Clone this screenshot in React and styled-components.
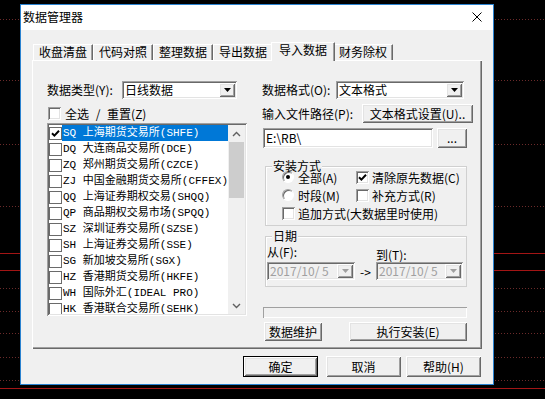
import React from "react";
import styled, { createGlobalStyle, css } from "styled-components";

const GlobalStyle = createGlobalStyle`
  html, body { margin: 0; padding: 0; background: #000; }
  body { font-family: "Noto Sans CJK SC", "Noto Sans", sans-serif; font-size: 12px; color: #000; }
  * { box-sizing: border-box; }
`;

const raised = css`
  background: #f0f0f0;
  box-shadow: inset 1px 1px #fff, inset -1px -1px #696969, inset 2px 2px #e3e3e3, inset -2px -2px #a0a0a0;
`;
const sunken = css`
  box-shadow: inset 1px 1px #a0a0a0, inset -1px -1px #fff, inset 2px 2px #696969, inset -2px -2px #e3e3e3;
`;

const Desktop = styled.div`
  position: relative;
  width: 545px;
  height: 399px;
  overflow: hidden;
  background: #000;
`;

const ChartLayer = styled.svg`
  position: absolute;
  left: 0;
  top: 0;
`;

const Window = styled.div`
  position: absolute;
  left: 20px;
  top: 4px;
  width: 474px;
  height: 381px;
  border: 1px solid #2a82d0;
  background: #f0f0f0;
  display: flex;
  flex-direction: column;
`;

const TitleBar = styled.div`
  height: 25px;
  flex: none;
  background: #fff;
  display: flex;
  align-items: center;
  justify-content: space-between;
  padding-left: 2px;
`;

const Title = styled.span`
  line-height: 16px;
  padding-bottom: 2px;
`;

const CloseBtn = styled.div`
  width: 32px;
  height: 25px;
  display: flex;
  align-items: center;
  justify-content: center;
  padding-bottom: 1px;
`;

const Body = styled.div`
  flex: 1;
  display: flex;
  flex-direction: column;
  padding: 12px 11px 7px 11px;
`;

const TabStrip = styled.div`
  display: flex;
  align-items: flex-end;
  height: 18px;
  padding-left: 1px;
  position: relative;
  z-index: 1;
`;

const Tab = styled.div`
  height: 16px;
  line-height: 14px;
  padding: 0 5px;
  border-top: 1px solid #fff;
  border-left: 1px solid #fff;
  border-right: 1px solid #696969;
  box-shadow: inset -1px 0 #a0a0a0;
  white-space: nowrap;
  background: #f0f0f0;
  ${(p) =>
    p.$active &&
    css`
      height: 19px;
      margin: 0 -2px -1px;
      padding: 0 7px;
      position: relative;
      z-index: 2;
    `}
`;

const Panel = styled.div`
  height: 289px;
  flex: none;
  box-shadow: inset 1px 1px #fff, inset -1px -1px #696969, inset -2px -2px #a0a0a0;
  display: grid;
  grid-template-columns: 200px 211px;
  column-gap: 15px;
  align-items: start;
  padding: 21px 0 0 15px;
`;

const Column = styled.div`
  display: flex;
  flex-direction: column;
`;

const FieldRow = styled.div`
  display: flex;
  align-items: center;
  height: ${(p) => p.$h || 18}px;
  margin-top: ${(p) => p.$mt || 0}px;
  margin-left: ${(p) => p.$ml || 0}px;
`;

const Label = styled.span`
  width: ${(p) => (p.$w ? `${p.$w}px` : "auto")};
  flex: none;
  line-height: 16px;
  white-space: nowrap;
`;

const Combo = styled.div`
  width: ${(p) => p.$w}px;
  height: 18px;
  flex: none;
  background: ${(p) => (p.$disabled ? "#f0f0f0" : "#fff")};
  display: flex;
  align-items: center;
  padding: 2px;
  ${sunken};
`;

const ComboText = styled.span`
  flex: 1;
  line-height: 14px;
  padding-left: 1px;
  white-space: nowrap;
  color: ${(p) => (p.$disabled ? "#a0a0a0" : "#000")};
`;

const DropBtn = styled.div`
  width: 16px;
  height: 100%;
  flex: none;
  display: flex;
  align-items: center;
  justify-content: center;
  ${raised};
`;

const Button = styled.button`
  font: inherit;
  color: #000;
  border: none;
  padding: 0;
  margin: 0 0 0 ${(p) => p.$ml || 0}px;
  width: ${(p) => p.$w}px;
  height: ${(p) => p.$h || 21}px;
  flex: none;
  line-height: 14px;
  white-space: nowrap;
  ${raised};
  ${(p) =>
    p.$default &&
    css`
      box-shadow: inset 0 0 0 1px #000, inset 2px 2px #fff, inset -2px -2px #696969, inset 3px 3px #e3e3e3,
        inset -3px -3px #a0a0a0;
    `}
`;

const TextBox = styled.div`
  width: ${(p) => p.$w}px;
  height: 20px;
  flex: none;
  background: #fff;
  padding: 2px 3px;
  line-height: 16px;
  ${sunken};
`;

const CheckBox = styled.span`
  width: 13px;
  height: 13px;
  flex: none;
  background: #fff;
  display: inline-flex;
  align-items: center;
  justify-content: center;
  ${(p) => (p.$flat ? css`border: 1px solid #6a6a6a;` : sunken)};
`;

const RadioCircle = styled.span`
  width: 12px;
  height: 12px;
  flex: none;
  border-radius: 50%;
  background: #fff;
  border: 1px solid;
  border-color: #a0a0a0 #fff #fff #a0a0a0;
  box-shadow: inset 1px 1px #696969;
  display: inline-flex;
  align-items: center;
  justify-content: center;
`;

const RadioDot = styled.span`
  width: 4px;
  height: 4px;
  border-radius: 50%;
  background: #000;
`;

const Option = styled.label`
  display: flex;
  align-items: center;
  gap: ${(p) => p.$gap || 3}px;
  height: 18px;
  white-space: nowrap;
  line-height: 13px;
  word-spacing: ${(p) => p.$wordGap || 0}px;
  grid-column: ${(p) => (p.$span ? "1 / -1" : "auto")};
`;

const ListBox = styled.div`
  height: 193px;
  margin-top: 1px;
  background: #fff;
  display: flex;
  padding: 2px;
  overflow: hidden;
  ${sunken};
`;

const ListItems = styled.div`
  flex: 1;
  min-width: 0;
  display: flex;
  flex-direction: column;
  overflow: hidden;
`;

const ListRow = styled.div`
  height: 16px;
  flex: none;
  display: flex;
  align-items: center;
`;

const ItemText = styled.span`
  flex: 1;
  min-width: 0;
  height: 16px;
  line-height: 16px;
  white-space: pre;
  overflow: hidden;
  padding-left: 1px;
  font-family: "Liberation Mono", "Noto Sans CJK SC", monospace;
  font-size: 11px;
  background: ${(p) => (p.$selected ? "#0078d7" : "transparent")};
  color: ${(p) => (p.$selected ? "#fff" : "#000")};
`;

const ScrollBar = styled.div`
  width: 17px;
  flex: none;
  background: #f0f0f0;
  display: flex;
  flex-direction: column;
`;

const ScrollArrow = styled.div`
  height: 17px;
  flex: none;
  display: flex;
  align-items: center;
  justify-content: center;
`;

const ScrollThumb = styled.div`
  height: 56px;
  flex: none;
  margin: 0 1px;
  background: #cdcdcd;
`;

const ScrollTrack = styled.div`
  flex: 1;
`;

const Group = styled.div`
  position: relative;
  margin-left: 3px;
  margin-top: ${(p) => p.$mt}px;
  width: 202px;
  height: ${(p) => p.$h}px;
  border: 1px solid #d0d0d0;
  box-shadow: inset 1px 1px #fff;
  padding: ${(p) => p.$pad};
`;

const Legend = styled.span`
  position: absolute;
  top: -6px;
  left: ${(p) => p.$x}px;
  padding: 0 1px;
  background: #f0f0f0;
  line-height: 10px;
`;

const OptionGrid = styled.div`
  display: grid;
  grid-template-columns: 74px 1fr;
`;

const DateGrid = styled.div`
  display: grid;
  grid-template-columns: 88px 21px 87px;
  grid-template-rows: 16px 20px;
  row-gap: 2px;
  align-items: start;
`;

const DateLabel = styled.span`
  line-height: 16px;
  white-space: nowrap;
  padding-top: ${(p) => p.$offset || 0}px;
`;

const Arrow = styled.span`
  line-height: 20px;
  text-align: center;
`;

const Progress = styled.div`
  margin: 20px 0 0 1px;
  width: 204px;
  height: 11px;
  background: #f0f0f0;
  box-shadow: inset 1px 1px #a0a0a0, inset -1px -1px #fff;
`;

const Footer = styled.div`
  display: flex;
  justify-content: flex-end;
  margin-top: 7px;
  padding-right: 1px;
`;

const Triangle = ({ color = "#000" }) => (
  <svg width="7" height="4" viewBox="0 0 7 4">
    <polygon points="0,0 7,0 3.5,4" fill={color} />
  </svg>
);

const Check = () => (
  <svg width="9" height="9" viewBox="0 0 9 9">
    <path d="M1 4.2 L3.4 6.6 L8 1.8" fill="none" stroke="#000" strokeWidth="2" />
  </svg>
);

const Chevron = ({ down }) => (
  <svg width="9" height="6" viewBox="0 0 9 6">
    <path
      d={down ? "M1 1 L4.5 4.5 L8 1" : "M1 5 L4.5 1.5 L8 5"}
      fill="none"
      stroke="#606060"
      strokeWidth="1.4"
    />
  </svg>
);

const CloseIcon = () => (
  <svg width="10" height="10" viewBox="0 0 10 10">
    <path d="M0.5 0.5 L9.5 9.5 M9.5 0.5 L0.5 9.5" stroke="#000" strokeWidth="1" />
  </svg>
);

const dottedY = [19, 80, 144, 206, 288, 311, 333, 357, 380];
const redY = [253, 270, 388];

const Chart = () => (
  <ChartLayer width="545" height="399" viewBox="0 0 545 399">
    {dottedY.map((y) => (
      <line key={y} x1="0" x2="545" y1={y + 0.5} y2={y + 0.5} stroke="#6b2a2a" strokeDasharray="1 2" />
    ))}
    {redY.map((y) => (
      <line key={y} x1="0" x2="545" y1={y + 0.5} y2={y + 0.5} stroke="#a31515" />
    ))}
  </ChartLayer>
);

const tabs = ["收盘清盘", "代码对照", "整理数据", "导出数据", "导入数据", "财务除权"];

const markets = [
  ["SQ", "上海期货交易所(SHFE)"],
  ["DQ", "大连商品交易所(DCE)"],
  ["ZQ", "郑州期货交易所(CZCE)"],
  ["ZJ", "中国金融期货交易所(CFFEX)"],
  ["QQ", "上海证券期权交易(SHQQ)"],
  ["QP", "商品期权交易市场(SPQQ)"],
  ["SZ", "深圳证券交易所(SZSE)"],
  ["SH", "上海证券交易所(SSE)"],
  ["SG", "新加坡交易所(SGX)"],
  ["HZ", "香港期货交易所(HKFE)"],
  ["WH", "国际外汇(IDEAL PRO)"],
  ["HK", "香港联合交易所(SEHK)"],
];

export default function App() {
  return (
    <>
      <GlobalStyle />
      <Desktop>
        <Chart />
        <Window>
          <TitleBar>
            <Title>数据管理器</Title>
            <CloseBtn>
              <CloseIcon />
            </CloseBtn>
          </TitleBar>
          <Body>
            <TabStrip>
              {tabs.map((t, i) => (
                <Tab key={t} $active={i === 4}>
                  {t}
                </Tab>
              ))}
            </TabStrip>
            <Panel>
              <Column>
                <FieldRow>
                  <Label $w={75}>数据类型(Y):</Label>
                  <Combo $w={115}>
                    <ComboText>日线数据</ComboText>
                    <DropBtn>
                      <Triangle />
                    </DropBtn>
                  </Combo>
                </FieldRow>
                <FieldRow $h={17} $mt={6} $ml={1}>
                  <Option $gap={4} $wordGap={4}>
                    <CheckBox />
                    全选 / 重置(Z)
                  </Option>
                </FieldRow>
                <ListBox>
                  <ListItems>
                    {markets.map(([code, name], i) => (
                      <ListRow key={code}>
                        <CheckBox $flat>{i === 0 && <Check />}</CheckBox>
                        <ItemText $selected={i === 0}>{`${code} ${name}`}</ItemText>
                      </ListRow>
                    ))}
                  </ListItems>
                  <ScrollBar>
                    <ScrollArrow>
                      <Chevron />
                    </ScrollArrow>
                    <ScrollThumb />
                    <ScrollTrack />
                    <ScrollArrow>
                      <Chevron down />
                    </ScrollArrow>
                  </ScrollBar>
                </ListBox>
              </Column>

              <Column>
                <FieldRow>
                  <Label $w={74}>数据格式(O):</Label>
                  <Combo $w={128}>
                    <ComboText>文本格式</ComboText>
                    <DropBtn>
                      <Triangle />
                    </DropBtn>
                  </Combo>
                </FieldRow>
                <FieldRow $h={19} $mt={5}>
                  <Label $w={100}>输入文件路径(P):</Label>
                  <Button $w={111} $h={19}>
                    文本格式设置(U)..
                  </Button>
                </FieldRow>
                <FieldRow $h={20} $mt={5} $ml={1}>
                  <TextBox $w={170}>E:\RB\</TextBox>
                  <Button $w={30} $h={20} $ml={4}>
                    ...
                  </Button>
                </FieldRow>

                <Group $mt={18} $h={60} $pad="1px 0 0 16px">
                  <Legend $x={6}>安装方式</Legend>
                  <OptionGrid>
                    <Option $gap={4}>
                      <RadioCircle>
                        <RadioDot />
                      </RadioCircle>
                      全部(A)
                    </Option>
                    <Option>
                      <CheckBox>
                        <Check />
                      </CheckBox>
                      清除原先数据(C)
                    </Option>
                    <Option $gap={4}>
                      <RadioCircle />
                      时段(M)
                    </Option>
                    <Option>
                      <CheckBox />
                      补充方式(R)
                    </Option>
                    <Option $span>
                      <CheckBox />
                      追加方式(大数据里时使用)
                    </Option>
                  </OptionGrid>
                </Group>

                <Group $mt={10} $h={51} $pad="7px 0 0 1px">
                  <Legend $x={6}>日期</Legend>
                  <DateGrid>
                    <DateLabel>从(F):</DateLabel>
                    <span />
                    <DateLabel $offset={3}>到(T):</DateLabel>
                    <Combo $w={88} $disabled>
                      <ComboText $disabled>2017/10/ 5</ComboText>
                      <DropBtn>
                        <Triangle color="#a0a0a0" />
                      </DropBtn>
                    </Combo>
                    <Arrow>-&gt;</Arrow>
                    <Combo $w={87} $disabled>
                      <ComboText $disabled>2017/10/ 5</ComboText>
                      <DropBtn>
                        <Triangle color="#a0a0a0" />
                      </DropBtn>
                    </Combo>
                  </DateGrid>
                </Group>

                <Progress />

                <FieldRow $h={19} $mt={4}>
                  <Button $w={58} $h={19} $ml={2}>
                    数据维护
                  </Button>
                  <Button $w={118} $h={19} $ml={27}>
                    执行安装(E)
                  </Button>
                </FieldRow>
              </Column>
            </Panel>
            <Footer>
              <Button $w={75} $default>
                确定
              </Button>
              <Button $w={75} $ml={8}>
                取消
              </Button>
              <Button $w={75} $ml={5}>
                帮助(H)
              </Button>
            </Footer>
          </Body>
        </Window>
      </Desktop>
    </>
  );
}
